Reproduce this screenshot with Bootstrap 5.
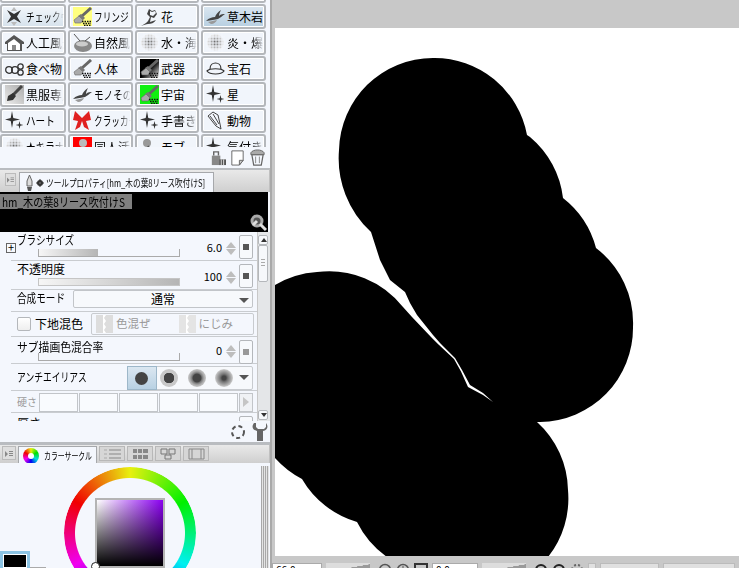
<!DOCTYPE html>
<html lang="ja"><head><meta charset="utf-8"><title>Clip Studio</title>
<link href="https://cdn.jsdelivr.net/npm/bootstrap@5.3.0/dist/css/bootstrap.min.css" rel="stylesheet">
<style>
html,body{margin:0;height:568px;overflow:hidden;background:#c8c8c8}
body{font-family:"Noto Sans CJK JP","Liberation Sans",sans-serif;color:#000;line-height:1}
.app{width:739px;height:568px}
.sidecol{width:270px;height:568px;background:#f4f7fd;flex:none;overflow:hidden}
.sidecol>*{flex:none}
.divider{width:5px;height:568px;flex:none;background:#c8c8c8;border-left:2px solid #a9a9a9}
.stage{width:464px;height:568px;flex:none;background:#c8c8c8;padding-top:28px}
.paper{height:528px;background:#fff;display:block;width:464px}
.statusbar{height:12px;padding-top:7px;gap:4px;overflow:hidden;margin-left:-3px}
.matlist{height:147px;overflow:hidden;display:grid;grid-template-columns:66px 65px 64px 65px;grid-template-rows:3px repeat(6,25px);gap:1px 2px;width:266px}
.mat{border:2px solid #b4b7bb;border-radius:3px;background:#f1f5fb;box-shadow:inset 0 0 0 1px #fff;display:flex;align-items:center;padding-left:3px;overflow:hidden;height:25px}
.mat.stub{border-top:0;border-radius:0 0 3px 3px;height:3px}
.mat.hover{background:linear-gradient(#f2f6fb,#d6e2ec)}
.mat.picked{background:linear-gradient(#dbe7f1,#b7cfe1)}
.mat svg{width:19px;height:19px;flex:none;margin-right:2px}
.mat .lbl{font-size:12px;white-space:nowrap;flex:1;overflow:hidden;-webkit-mask-image:linear-gradient(90deg,#000 68%,transparent 100%);mask-image:linear-gradient(90deg,#000 68%,transparent 100%)}
.mat .lbl.plain{-webkit-mask-image:none;mask-image:none}
.lbl span,.pname span,.seltext span{display:inline-block;transform-origin:left center}
.sq6{transform:scaleX(.73)}.sq7{transform:scaleX(.72)}.sq8{transform:scaleX(.8)}.sq84{transform:scaleX(.84)}.sq9{transform:scaleX(.9)}
.actionbar{height:21px;justify-content:flex-end;align-items:center;padding-right:4px;gap:3px}
.actionbar svg{width:17px;height:17px}
.tabstrip{height:24px;border-top:2px solid #b9bcc0;background:linear-gradient(#e9e9e9,#cfcfcf);padding:2px 0 0 5px;gap:3px;align-items:flex-start;width:270px;border-right:1px solid #c0c0c0;overflow:hidden}
.menubtn{width:11px;height:13px;margin-top:1px;border:1px solid #bbb;background:#dedede;flex:none;padding:2px 1px;display:flex}
.menubtn svg{width:8px;height:8px}
.menubtn.wide{width:14px;height:14px;margin-top:0;padding:3px 2px}
.tabon{background:#f4f7fd;border:1px solid #a6a8ab;border-bottom:0;height:20px;display:flex;align-items:center;padding-left:5px;flex:none;overflow:hidden}
.proptab{width:195px;font-size:10px;white-space:nowrap}
.proptab svg{margin-right:2px;flex:none}
.proptab b{font-weight:400;display:inline-block;transform:scaleX(.765);transform-origin:left center}
.nameblock{height:40px;background:#000;position:relative;width:268px}
.nameblock .seltext{display:inline-block;background:#808080;color:#000;font-size:12px;line-height:15px;height:15px;margin-top:2px;padding:0 0 0 2px;width:132px;white-space:nowrap;overflow:hidden}
.nameblock svg{position:absolute;right:1px;bottom:1px;width:18px;height:18px}
.propwrap{height:189px;overflow:hidden}
.proplist{width:257px;height:189px;overflow:hidden;background:#f4f7fd}
.proplist>*{flex:none}
.vscroll{width:13px;background:#e4e6e8;border-left:1px solid #c8c8c8;flex:none;height:189px;padding:3px 0 1px;display:flex;flex-direction:column}
.vscroll i{display:block;width:10px;background:#f6f8fb;border:1px solid #b4b7bb;border-radius:2px}
.vscroll .arr{height:10px;position:relative}
.vscroll .arr::after{content:"";position:absolute;left:2px;top:2px;border-left:3px solid transparent;border-right:3px solid transparent;border-bottom:4px solid #333}
.vscroll .arr.down::after{border-bottom:0;border-top:4px solid #333}
.vscroll .thumb{height:37px;margin-bottom:auto;position:relative}
.vscroll .thumb::after{content:"";position:absolute;left:2px;right:2px;top:13px;height:7px;background:repeating-linear-gradient(#aaa 0 1px,transparent 1px 3px)}
.propitem{position:relative;border-bottom:1px solid #c9ccd0;margin-left:11px;padding-left:6px;font-size:12px}
.rowa{height:29px}.rowb{height:22px;padding-bottom:5px}.rowc{height:25px}.rowd{height:27px}.rowe{height:27px}.rowf{height:22px}
.rowg{height:12px;padding-top:4px;overflow:hidden;border-bottom:0}
.rowa,.rowd{display:flex;align-items:flex-start;padding-top:2px}
.rowd{padding-top:4px}
.rowb,.rowc,.rowe,.rowf{display:flex;align-items:center}
.pname{white-space:nowrap}
.slidetrack{position:absolute;left:27px;top:17px;width:142px;height:8px;border-left:1px solid #aaa;border-bottom:1px solid #aaa;border-right:1px solid #aaa}
.slidetrack.box{background:#fff;border:1px solid #c5c5c5}
.slidetrack u{display:block;height:100%;background:linear-gradient(90deg,#f6f6f6,#b5b5b5)}
.rowd .slidetrack{top:16px}
.valnum{position:absolute;right:35px;top:10px;font-size:11px}
.rowd .valnum{top:8px}
.spin{position:absolute;right:21px;top:10px;width:10px;height:13px;display:flex;flex-direction:column;justify-content:space-between}
.rowd .spin{top:8px}
.spin i{display:block;width:0;height:0;border-left:5px solid transparent;border-right:5px solid transparent}
.spin .up{border-bottom:6px solid #bdbdbd}.spin .dn{border-top:6px solid #bdbdbd}
.pokebtn{position:absolute;right:4px;top:3px;width:14px;height:24px;background:#f7f9fc;border:1px solid #b4b7bb;border-radius:2px;display:flex;align-items:center;justify-content:center}
.pokebtn::after{content:"";width:6px;height:6px;background:#555}
.pokebtn.dim::after{background:#999}
.plusbox{position:absolute;left:-5px;top:11px;width:10px;height:10px;border:1px solid #666;background:#f7f9fc;font-size:11px;line-height:7px;text-align:center}
.dropsel{position:absolute;left:62px;right:4px;top:0;bottom:3px;background:#f7f9fc;border:1px solid #c2c5c9;border-radius:2px;text-align:center;font-size:12px;line-height:16px}
.dropsel::after,.aabox::after{content:"";position:absolute;right:3px;top:7px;border-left:5px solid transparent;border-right:5px solid transparent;border-top:5px solid #555}
.aabox::after{top:8px}
.tickbox{width:14px;height:14px;border:1px solid #b4b7bb;border-radius:2px;background:linear-gradient(#fff,#eee);margin-right:4px;flex:none}
.mixbox{position:absolute;left:80px;right:3px;top:1px;bottom:1px;border:1px solid #c8cbcf;border-radius:2px;font-size:11.5px;color:#999;display:flex;align-items:center;padding-left:4px}
.mixbox svg{width:17px;height:18px;margin-right:3px;flex:none}
.aabox{position:absolute;left:116px;right:4px;top:2px;height:24px;border:1px solid #c8cbcf;border-radius:2px;display:flex;align-items:center;background:#f7f9fc}
.aabox .opt{width:27.5px;height:22px;display:flex;align-items:center;justify-content:center;flex:none}
.aabox .opt.on{background:linear-gradient(#dbe7f1,#b8d1e3);outline:1px solid #9db7c9}
.dotx{width:13px;height:13px;border-radius:50%;background:#444;display:block}
.dot2{background:radial-gradient(circle,#444 0 5px,#c8c8c8 5.5px 9px);width:18px;height:18px}
.dot3{background:radial-gradient(circle,#444 0 4px,#777 5px,#aaa 7px,#c8c8c8 9px);width:18px;height:18px}
.dot4{background:radial-gradient(circle,#444 0 2px,#777 4px,#aaa 7px,#d0d0d0 9px);width:18px;height:18px}
.hardrow{position:absolute;left:28px;top:2px;display:flex;gap:1px}
.hardrow i{display:block;width:39px;height:19px;background:#f9fbfe;border:1px solid #c2c5c9}
.hardnext{position:absolute;right:4px;top:2px;width:14px;height:19px;border:1px solid #c2c5c9;background:#f0f2f5}
.hardnext::after{content:"";position:absolute;left:3px;top:3px;border-top:5px solid transparent;border-bottom:5px solid transparent;border-left:6px solid #c5c5c5}
.lightlbl{color:#9a9a9a;font-size:10px}
.toolbar2{height:21px;justify-content:flex-end;align-items:center;padding-right:2px;gap:6px}
.toolbar2 svg{width:16px;height:18px}
.sep{height:3px;background:#b9bcc0}
.colortabs{height:18px;padding:1px 0 0 2px;gap:2px;background:linear-gradient(#e9e9e9,#cfcfcf);align-items:flex-start;overflow:hidden;width:270px;border-right:1px solid #c0c0c0;margin-bottom:-3px}
.colortab2{width:26px;height:15px;border:1px solid #b8b8b8;background:#d6d6d6;flex:none;display:flex;align-items:center;justify-content:center}
.colortab2 svg{width:17px;height:12px}
.circletab{width:79px;height:18px;font-size:10px;white-space:nowrap;padding-left:4px;position:relative;z-index:1}
.circletab i{display:block;width:16px;height:16px;border-radius:50%;background:conic-gradient(#e8f010,#00e000 60deg,#00e0e0 120deg,#0000f0 180deg,#f000f0 240deg,#f00000 300deg,#e8f010);margin-right:5px;flex:none;position:relative}
.circletab i::after{content:"";position:absolute;left:5px;top:5px;width:6px;height:6px;background:#fff;border-radius:50%}
.circletab b{font-weight:400;display:inline-block;transform:scaleX(.69);transform-origin:left center}
.wheelpane{position:relative;height:108px;overflow:hidden;padding:7px 0 0 64px}
.wheelring{width:132px;height:132px;position:relative;display:flex;align-items:center;justify-content:center}
.wheelring::before{content:"";position:absolute;inset:0;border-radius:50%;background:conic-gradient(#e8f010,#00f000 60deg,#00f0f0 120deg,#0000f0 180deg,#f000f0 240deg,#f00000 300deg,#e8f010);-webkit-mask-image:radial-gradient(circle closest-side,transparent 54.5px,#000 55.5px);mask-image:radial-gradient(circle closest-side,transparent 54.5px,#000 55.5px)}
.svpick{width:70px;height:70px;flex:none;border:2px solid #b4b4b4;position:relative;background:linear-gradient(transparent,#000),linear-gradient(90deg,#fff,#8a00f0)}
.svdot{position:absolute;left:91px;bottom:-3px;width:9px;height:9px;border:1px solid #222;border-radius:50%;background:#fff}
.grips{position:absolute;left:261px;top:6px;bottom:0;width:8px;background:repeating-linear-gradient(90deg,#a8a8a8 0 1px,#e4e4e4 1px 2px)}
.fgswatch{position:absolute;left:0;bottom:0;width:30px;height:17px;background:#000;border:3px solid #8cc4e4;border-bottom:0;box-shadow:inset 0 0 0 1px #fff}
.bgline{position:absolute;left:30px;bottom:0;width:16px;height:1px;background:#aaa}
.stfield{height:12px;background:#fff;border:1px solid #aaa;font-size:10px;padding:1px 0 0 3px;flex:none}
.w50{width:50px}.w46{width:46px}
.wedge{width:44px;height:12px;flex:none;background:linear-gradient(170deg,#ddd 45%,#9a9a9a 46%)}
.stico{width:14px;height:12px;flex:none}
.stslide{height:12px;background:#e0e0e0;border:1px solid #bbb;flex:none}
</style></head><body>
<svg width="0" height="0" class="position-absolute"><defs>
<symbol id="ic-stars" viewBox="0 0 19 19"><path fill="#333" d="M7 0 8.300 7 15 8.500 8.300 10 7 17 5.700 10 0 8.500 5.700 7ZM14.500 10l.8 3.200 3.200.8-3.200.8-.8 3.200-.8-3.200-3.200-.8 3.200-.8Z"/></symbol>
<symbol id="ic-dots" viewBox="0 0 19 19"><defs><radialGradient id="gd"><stop offset="0" stop-color="#555"/><stop offset="1" stop-color="#eee"/></radialGradient></defs><circle cx="9.500" cy="9.500" r="8.500" fill="url(#gd)"/><path stroke="#f4f7fd" d="M0 4h19M0 7h19M0 10h19M0 13h19M0 16h19M4 0v19M7 0v19M10 0v19M13 0v19M16 0v19"/></symbol>
<symbol id="ic-brush" viewBox="0 0 19 19"><path stroke="#666" stroke-width="3" d="M18 1 9 9"/><path fill="#777" d="M8 7l4 4-2 2-5-4Z"/><path fill="#aaa" stroke="#666" stroke-width=".6" d="M6 9l4 4-2 3-6 0-1-3Z"/><path stroke="#111" stroke-width="1.500" stroke-dasharray="1.500 1" fill="none" d="M9 14.500h9M10 16.500h8M11 18.500h7"/></symbol>
<symbol id="ic-grass" viewBox="0 0 19 19"><path fill="#444" d="M0 14c3-3 6-4 9-4 1-3 3-5 6-7-1 2-2 4-2 6 2-2 4-2 6-2-3 2-5 4-7 5-3 1-7 1-12 2Z"/><path fill="#999" d="M2 15c3-1 6-1 9-2-1 2-3 4-6 4Z"/></symbol>
</defs></svg>
<div class="app d-flex">
 <aside class="sidecol d-flex flex-column">
  <div class="matlist">
   <div class="mat stub"></div><div class="mat stub"></div><div class="mat stub"></div><div class="mat stub"></div>
   <div class="mat hover"><svg viewBox="0 0 19 19"><path fill="#333" d="M2 3 9 7 16 3 12 9.500 16 16 9 12 2 16 6 9.500Z"/><path fill="#bbb" d="M9 0l3 4H6ZM9 19l-3-4h6Z"/></svg><div class="lbl"><span class="sq7">チェックウ</span></div></div>
   <div class="mat"><svg viewBox="0 0 19 19"><rect width="19" height="19" fill="#ffff80"/><use href="#ic-brush"/></svg><div class="lbl plain"><span class="sq7">フリンジ</span></div></div>
   <div class="mat"><svg viewBox="0 0 19 19"><path fill="#444" d="M1 19c3-2 6-3 7-5l2-4-3-3 2-5 3 2 3-1 2 4-3 4-3-1-1 5 6-2c-2 3-5 4-8 4-2 0-4 1-7 2Z"/><path fill="#f1f5fb" d="M10 4l2 1 3-1 1 2-3 3-3-1Z"/></svg><div class="lbl plain">花</div></div>
   <div class="mat picked"><svg><use href="#ic-grass"/></svg><div class="lbl plain">草木岩</div></div>

   <div class="mat"><svg viewBox="0 0 19 19"><path fill="#555" d="M9 2 19 9v2h-2v7H2v-7H0V9Z"/><path fill="#fff" d="M3 10l6-4 6 5v6H3Z"/><path fill="#888" d="M7 12h4v5H7Z"/></svg><div class="lbl">人工風景</div></div>
   <div class="mat"><svg viewBox="0 0 19 19"><ellipse cx="10" cy="13" rx="9" ry="6" fill="#888"/><ellipse cx="9" cy="11" rx="6" ry="2.500" fill="#ccc"/><path stroke="#555" fill="none" d="M1 1l6 7M17 4l-5 4"/></svg><div class="lbl">自然風景</div></div>
   <div class="mat"><svg><use href="#ic-dots"/></svg><div class="lbl">水・海ブ</div></div>
   <div class="mat"><svg><use href="#ic-dots"/></svg><div class="lbl">炎・爆発</div></div>

   <div class="mat"><svg viewBox="0 0 19 19"><g fill="none" stroke="#333" stroke-width="1.300"><circle cx="4" cy="11" r="3.300"/><circle cx="10" cy="11" r="3.300"/><circle cx="15.500" cy="7.500" r="2.700"/><circle cx="15.500" cy="13.500" r="2.700"/></g></svg><div class="lbl plain">食べ物</div></div>
   <div class="mat"><svg><use href="#ic-brush"/></svg><div class="lbl plain">人体</div></div>
   <div class="mat"><svg viewBox="0 0 19 19"><defs><linearGradient id="gk" x1="0" y1="0" x2="1" y2="1"><stop offset=".5" stop-color="#000"/><stop offset="1" stop-color="#fff"/></linearGradient></defs><rect width="19" height="19" fill="url(#gk)"/><use href="#ic-brush"/></svg><div class="lbl plain">武器</div></div>
   <div class="mat"><svg viewBox="0 0 19 19"><path fill="none" stroke="#333" stroke-width="1.200" d="M4 10c0-8 11-8 11 0M1 12c3-3 14-3 17 0-3 4-14 4-17 0Z"/></svg><div class="lbl plain">宝石</div></div>

   <div class="mat"><svg viewBox="0 0 19 19"><defs><linearGradient id="gg" x1="0" y1="1" x2="1" y2="0"><stop offset="0" stop-color="#eee"/><stop offset="1" stop-color="#aaa"/></linearGradient></defs><rect width="19" height="19" fill="url(#gg)"/><path stroke="#444" stroke-width="3" d="M17 1 8 10"/><path fill="#333" d="M8 8l3 3-3 4-6 1 1-5Z"/></svg><div class="lbl">黒服専用</div></div>
   <div class="mat"><svg><use href="#ic-grass"/></svg><div class="lbl"><span class="sq8">モノその他</span></div></div>
   <div class="mat"><svg viewBox="0 0 19 19"><rect width="19" height="19" fill="#10f010"/><use href="#ic-brush"/></svg><div class="lbl plain">宇宙</div></div>
   <div class="mat"><svg><use href="#ic-stars"/></svg><div class="lbl plain">星</div></div>

   <div class="mat"><svg><use href="#ic-stars"/></svg><div class="lbl plain"><span class="sq8">ハート</span></div></div>
   <div class="mat"><svg viewBox="0 0 19 19"><path fill="#e02020" d="M9 7 2 0 0 9l5 1-3 9 5-3 2-6 2 6 5 3-3-9 5-1-2-9Z"/></svg><div class="lbl"><span class="sq7">クラッカー</span></div></div>
   <div class="mat"><svg><use href="#ic-stars"/></svg><div class="lbl">手書きシ</div></div>
   <div class="mat"><svg viewBox="0 0 19 19"><path fill="#f4f7fd" stroke="#444" d="M2 5 7 1l5 3 2 9 1 5-5-3Z"/><path stroke="#444" d="M4 5l7 9M7 3l6 10"/></svg><div class="lbl plain">動物</div></div>

   <div class="mat"><svg><use href="#ic-dots"/></svg><div class="lbl"><span class="sq8">★キラナ</span></div></div>
   <div class="mat"><svg viewBox="0 0 19 19"><rect width="19" height="19" fill="#f00"/><circle cx="10" cy="6" r="4" fill="#bbb"/><rect x="3" y="11" width="14" height="8" fill="#bbb"/></svg><div class="lbl">同人活動</div></div>
   <div class="mat"><svg viewBox="0 0 19 19"><circle cx="7" cy="6" r="4" fill="#999"/><path stroke="#555" stroke-width="2" d="M8 9l4 9"/></svg><div class="lbl plain">モブ</div></div>
   <div class="mat"><svg><use href="#ic-stars"/></svg><div class="lbl">気付きコ</div></div>
  </div>
  <div class="actionbar d-flex">
   <svg viewBox="0 0 18 18"><path fill="#888" d="M3 7h9v10H3Z"/><path fill="none" stroke="#666" stroke-width="1.500" d="M5 7V3h5v4"/><path fill="#555" d="M11 11h7v6h-7Z"/><path stroke="#ddd" d="M13 11v6M15.500 11v6"/></svg>
   <svg viewBox="0 0 18 18"><path fill="#fff" stroke="#666" d="M3 2h12v10l-4 5H3Z"/><path fill="#ccc" stroke="#666" d="M15 12l-4 5v-5Z"/></svg>
   <svg viewBox="0 0 18 18"><path fill="#f4f7fd" stroke="#666" stroke-width="1.300" d="M3 6l2 11h8l2-11Z"/><path fill="#aaa" stroke="#666" d="M2 4c2-4 12-4 14 0v2H2Z"/><path stroke="#888" d="M7 8v7M11 8v7"/></svg>
  </div>
  <div class="tabstrip d-flex">
   <div class="menubtn"><svg viewBox="0 0 8 8"><path fill="#888" d="M0 1l3 3-3 3ZM4 1h4v1H4Zm0 2h4v1H4Zm0 2h4v1H4Z"/></svg></div>
   <div class="tabon proptab">
    <svg width="9" height="16" viewBox="0 0 9 16"><path fill="#ddd" stroke="#666" d="M4.500 0 7 6v5H2V6Z"/><path fill="#555" d="M2 12h5l-1 4H3Z"/></svg>
    <svg width="8" height="8" viewBox="0 0 8 8"><circle cx="4" cy="4" r="3" fill="#333"/><circle cx="4" cy="4" r="1" fill="#fff"/><path stroke="#333" d="M4 0v8M0 4h8"/></svg>
    <b>ツールプロパティ[hm_木の葉8リース吹付けS]</b>
   </div>
  </div>
  <div class="nameblock"><span class="seltext"><span class="sq84">hm_木の葉8リース吹付けS</span></span>
   <svg viewBox="0 0 18 18"><circle cx="8" cy="8" r="6.500" fill="#aaa"/><circle cx="8" cy="8" r="3.500" fill="#555"/><path stroke="#ddd" stroke-width="3" d="M4 12l4-4M11 11l6 6"/></svg>
  </div>
  <div class="propwrap d-flex">
   <div class="proplist d-flex flex-column">
    <div class="propitem rowa"><span class="plusbox">+</span><span class="pname"><span class="sq8">ブラシサイズ</span></span><div class="slidetrack"><u style="width:42%"></u></div><span class="valnum">6.0</span><div class="spin"><i class="up"></i><i class="dn"></i></div><div class="pokebtn"></div></div>
    <div class="propitem rowa"><span class="pname">不透明度</span><div class="slidetrack box"><u style="width:100%"></u></div><span class="valnum">100</span><div class="spin"><i class="up"></i><i class="dn"></i></div><div class="pokebtn"></div></div>
    <div class="propitem rowb"><span class="pname"><span class="sq8">合成モード</span></span><div class="dropsel">通常</div></div>
    <div class="propitem rowc"><span class="tickbox"></span><span class="pname">下地混色</span><div class="mixbox">
      <svg viewBox="0 0 17 18"><rect width="17" height="18" fill="#ddd"/><path fill="#fff" d="M7 0h3l-2 3 2 3-2 3 2 3-2 3 2 3H7Z"/></svg><span class="me-4">色混ぜ</span>
      <svg viewBox="0 0 17 18" class="ms-1"><rect width="17" height="18" fill="#e4e4e4"/><path fill="#fff" d="M7 0h3l-2 3 2 3-2 3 2 3-2 3 2 3H7Z"/></svg><span>にじみ</span></div></div>
    <div class="propitem rowd"><span class="pname"><span class="sq9">サブ描画色混合率</span></span><div class="slidetrack"></div><span class="valnum">0</span><div class="spin"><i class="up"></i><i class="dn"></i></div><div class="pokebtn dim"></div></div>
    <div class="propitem rowe"><span class="pname"><span class="sq6">アンチエイリアス</span></span><div class="aabox"><span class="opt on"><i class="dotx"></i></span><span class="opt"><i class="dotx dot2"></i></span><span class="opt"><i class="dotx dot3"></i></span><span class="opt"><i class="dotx dot4"></i></span></div></div>
    <div class="propitem rowf"><span class="pname lightlbl">硬さ</span><div class="hardrow"><i></i><i></i><i></i><i></i><i></i></div><div class="hardnext"></div></div>
    <div class="propitem rowg"><span class="pname">厚さ</span><div class="pokebtn"></div></div>
   </div>
   <div class="vscroll"><i class="arr"></i><i class="thumb"></i><i class="arr down"></i></div>
  </div>
  <div class="toolbar2 d-flex">
   <svg viewBox="0 0 16 18"><circle cx="8" cy="9" r="6" fill="none" stroke="#555" stroke-width="2" stroke-dasharray="4 3"/></svg>
   <svg viewBox="0 0 16 18"><path fill="#666" d="M2 0C-1 4 1 7 5 8v10h6V8c4-1 6-4 3-8v4l-2 2H8L6 6 4 4 4 0Z"/></svg>
  </div>
  <div class="sep"></div>
  <div class="colortabs d-flex">
   <div class="menubtn wide"><svg viewBox="0 0 8 8"><path fill="#888" d="M0 1l3 3-3 3ZM4 1h4v1H4Zm0 2h4v1H4Zm0 2h4v1H4Z"/></svg></div>
   <div class="tabon circletab"><i></i><b>カラーサークル</b></div>
   <div class="colortab2"><svg viewBox="0 0 17 12"><path stroke="#888" d="M5 2h12M5 6h12M5 10h12"/><path stroke="#aaa" d="M0 2h3M0 6h3M0 10h3"/></svg></div>
   <div class="colortab2"><svg viewBox="0 0 17 12"><path fill="#888" d="M1 1h4v4H1Zm5 0h4v4H6Zm5 0h5v4h-5ZM1 7h4v4H1Zm5 0h4v4H6Zm5 0h5v4h-5Z"/></svg></div>
   <div class="colortab2"><svg viewBox="0 0 17 12"><path fill="none" stroke="#777" d="M1 1h6v5H1Zm8 0h6v5H9Zm-4 6h6v4H5Z"/></svg></div>
   <div class="colortab2"><svg viewBox="0 0 17 12"><path fill="none" stroke="#888" d="M1 1h15v10H1ZM4 1v10M13 1v10"/></svg></div>
  </div>
  <div class="wheelpane">
   <div class="wheelring"><div class="svpick"></div></div>
   <span class="svdot"></span><div class="grips"></div><div class="bgline"></div><div class="fgswatch"></div>
  </div>
 </aside>
 <div class="divider"></div>
 <main class="stage">
  <svg class="paper" viewBox="275 28 464 528"><path fill="#000" d="M371 232A100 100 0 0 1 339 150 94 94 0 0 1 433 58 94 94 0 0 1 527 135L530 137A94 94 0 0 1 563 198 94 94 0 0 1 596 248 94 94 0 0 1 633 327 94 94 0 0 1 540 422L537 422A94 94 0 0 1 568 490 94 94 0 0 1 548 557H387A94 94 0 0 1 357 522 94 94 0 0 1 302 479 94 94 0 0 1 275 458V285A94 94 0 0 1 317 272 94 94 0 0 1 403 307L412 317 431 337 438.500 344.500 454 359 461 371.500 468 387 483 395 493 402 483 393 470 385 462 370 455 358 440 343 433 335 417 315 410 303 405 292 390 280 380 260Z"/></svg>
  <div class="statusbar d-flex">
   <div class="stfield w50">66.0</div><div class="wedge"></div>
   <svg class="stico ms-1" viewBox="0 0 14 12"><circle cx="7" cy="7" r="5.500" fill="none" stroke="#555" stroke-width="1.500"/></svg>
   <svg class="stico" viewBox="0 0 14 12"><circle cx="7" cy="7" r="5.500" fill="none" stroke="#555" stroke-width="1.500"/><path stroke="#555" d="M7 3v6"/></svg>
   <svg class="stico" viewBox="0 0 14 12"><rect x="1" y="1" width="12" height="11" fill="none" stroke="#333" stroke-width="2"/></svg>
   <div class="stfield w46">0.0</div><div class="wedge"></div>
   <svg class="stico ms-1" viewBox="0 0 14 12"><circle cx="7" cy="7" r="5" fill="none" stroke="#222" stroke-width="2"/></svg>
   <svg class="stico" viewBox="0 0 14 12"><circle cx="7" cy="7" r="5" fill="none" stroke="#222" stroke-width="2"/></svg>
   <svg class="stico" viewBox="0 0 14 12"><circle cx="7" cy="7" r="5" fill="none" stroke="#666" stroke-dasharray="2 2" stroke-width="2"/></svg>
   <div class="stslide" style="width:8px"></div><div class="stslide" style="width:59px"></div><div class="stslide" style="width:72px"></div>
  </div>
 </main>
</div>
</body></html>
